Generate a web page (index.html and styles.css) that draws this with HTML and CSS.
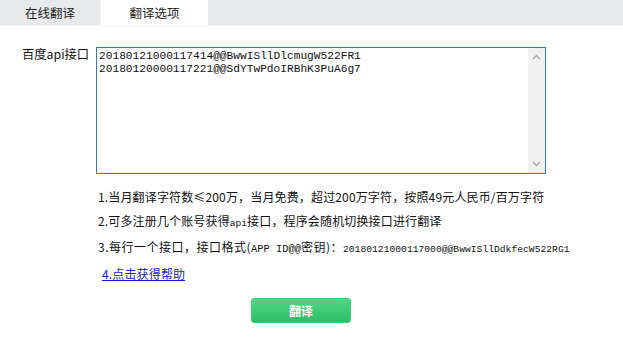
FILE: index.html
```html
<!DOCTYPE html>
<html>
<head>
<meta charset="utf-8">
<link rel="stylesheet" href="styles.css">
</head>
<body>
<div class="tabs">
  <div class="tab">在线翻译</div>
  <div class="tab active">翻译选项</div>
</div>
<div class="form">
  <div class="row">
    <div class="label">百度api接口</div>
    <div class="box">
      <div class="content">20180121000117414@@BwwISllDlcmugW522FR1<br>20180120000117221@@SdYTwPdoIRBhK3PuA6g7</div>
      <div class="scroll">
        <svg width="9" height="6" viewBox="0 0 9 6"><path d="M1 5 L4.5 1.5 L8 5" fill="none" stroke="#a8a8a8" stroke-width="1.3"/></svg>
        <svg width="9" height="6" viewBox="0 0 9 6"><path d="M1 1 L4.5 4.5 L8 1" fill="none" stroke="#a8a8a8" stroke-width="1.3"/></svg>
      </div>
    </div>
  </div>
  <div class="notes">
    <div class="note">1.当月翻译字符数≤200万，当月免费，超过200万字符，按照49元人民币/百万字符</div>
    <div class="note">2.可多注册几个账号获得<span class="mono">api</span>接口，程序会随机切换接口进行翻译</div>
    <div class="note wide">3.每行一个接口，接口格式(<span class="mono big">APP ID@@</span>密钥)：<span class="mono key">20180121000117000@@BwwISllDdkfecW522RG1</span></div>
    <div class="note"><a class="link" href="#">4.点击获得帮助</a></div>
  </div>
  <div class="actions">
    <button class="btn">翻译</button>
  </div>
</div>
</body>
</html>
```

FILE: styles.css
```css
html, body {
  margin: 0;
  padding: 0;
  background: #fff;
  font-family: "Noto Sans CJK SC", "Liberation Sans", sans-serif;
  font-size: 12px;
  color: #111;
}
.tabs {
  display: flex;
  height: 25px;
  background: #e8e9ea;
  border-bottom: 1px solid #f1f1f1;
}
.tab {
  width: 100px;
  line-height: 25px;
  text-align: center;
  font-size: 12.5px;
  color: #222;
  border-right: 1px solid #f4f4f4;
}
.tab.active {
  width: 107px;
  background: #fff;
  border-right: none;
}
.form {
  padding: 21px 0 0 22px;
}
.row {
  display: flex;
  align-items: flex-start;
}
.label {
  width: 74px;
  line-height: 14px;
  font-size: 12.3px;
  color: #111;
}
.box {
  width: 448px;
  height: 125px;
  border: 1px solid #2f7fb6;
  display: flex;
}
.content {
  flex: 1;
  padding: 2px 0 0 2px;
  font-family: "Liberation Mono", monospace;
  font-size: 11.2px;
  line-height: 13px;
  color: #111;
}
.scroll {
  width: 17px;
  background: #f0f0f0;
  display: flex;
  flex-direction: column;
  justify-content: space-between;
  align-items: center;
  padding: 6px 0 6px;
}
.notes {
  padding: 16px 0 0 76px;
  display: flex;
  flex-direction: column;
  gap: 9.5px;
}
.note {
  line-height: 14px;
  font-size: 12px;
  letter-spacing: 0.15px;
  color: #111;
}
.note.wide {
  letter-spacing: 0.5px;
}
.mono {
  font-family: "Liberation Mono", monospace;
  font-size: 9.6px;
  letter-spacing: 0;
}
.mono.big {
  font-size: 10.4px;
}
.mono.key {
  font-size: 9.6px;
  letter-spacing: 0.05px;
}
.link {
  color: #1a1acc;
  text-decoration: underline;
  padding-left: 4px;
}
.actions {
  display: flex;
  padding: 17px 0 0 229px;
}
.btn {
  width: 100px;
  height: 25px;
  border: 1px solid #3fcf78;
  border-radius: 3px;
  background: linear-gradient(#52d686, #2cbe66);
  color: #fff;
  font-family: "Noto Sans CJK SC", sans-serif;
  font-size: 12px;
  font-weight: bold;
  padding: 0;
}
```
